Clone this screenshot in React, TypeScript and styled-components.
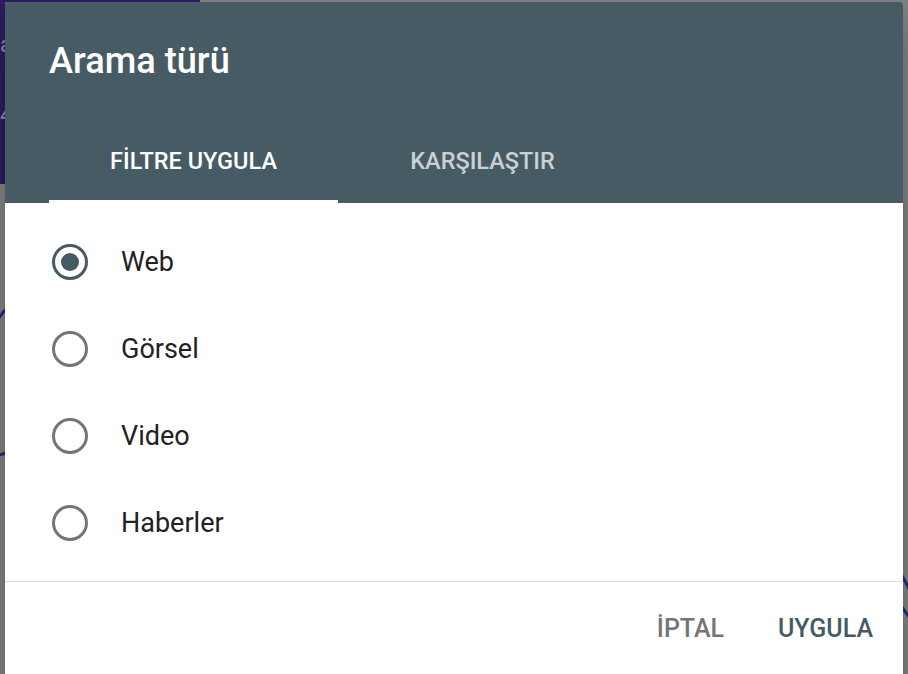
import React, { useState } from "react";
import styled, { createGlobalStyle } from "styled-components";

const Global = createGlobalStyle`
  html, body { margin: 0; padding: 0; width: 908px; height: 674px; overflow: hidden; }
  body { font-family: Roboto, "Noto Sans", Arial, sans-serif; -webkit-font-smoothing: antialiased; }
  * { box-sizing: border-box; }
`;

const Page = styled.div`
  position: relative;
  width: 908px;
  height: 674px;
  background: #7f7f7f;
  overflow: hidden;
`;

const BackTop = styled.div`
  display: flex;
  height: 184px;
`;

const BackBar = styled.div`
  width: 200px;
  height: 184px;
  background: #2c1b5f;
  display: flex;
  flex-direction: column;
  padding: 32px 0 0 0;
  gap: 44px;
  color: #8f87ad;
  font-size: 22px;
  line-height: 26px;
`;

const BackChart = styled.svg`
  display: block;
  width: 908px;
  height: 490px;
`;

const Dialog = styled.div`
  position: absolute;
  left: 5px;
  top: 2px;
  width: 898px;
  height: 700px;
  background: #ffffff;
  border-radius: 2px;
  overflow: hidden;
  box-shadow: 0 11px 15px -7px rgba(0,0,0,0.2), 0 24px 38px 3px rgba(0,0,0,0.14);
  display: flex;
  flex-direction: column;
`;

const Header = styled.div`
  background: #475b65;
  display: flex;
  flex-direction: column;
`;

const Title = styled.h2`
  margin: 0;
  height: 116px;
  padding: 38px 0 0 44px;
  font-size: 36.2px;
  line-height: 42px;
  font-weight: 500;
  color: #ffffff;
`;

const TabBar = styled.div`
  display: flex;
  padding-left: 44px;
  height: 85px;
`;

const Tab = styled.button<{ $active: boolean }>`
  position: relative;
  width: 289px;
  height: 85px;
  border: none;
  background: transparent;
  padding: 0;
  font-family: inherit;
  font-size: 23.5px;
  line-height: 28px;
  font-weight: 500;
  color: ${(p) => (p.$active ? "#ffffff" : "rgba(255,255,255,0.72)")};
  display: flex;
  align-items: center;
  justify-content: center;
  cursor: pointer;
  &::after {
    content: "";
    position: absolute;
    left: 0;
    right: 0;
    bottom: 0;
    height: 3px;
    background: ${(p) => (p.$active ? "#ffffff" : "transparent")};
  }
`;

const List = styled.div`
  display: flex;
  flex-direction: column;
  padding: 15px 0 15px 47px;
  border-bottom: 1px solid #dedede;
`;

const Row = styled.label`
  display: flex;
  align-items: center;
  gap: 33px;
  height: 87px;
  cursor: pointer;
`;

const Radio = styled.span<{ $checked: boolean }>`
  width: 36px;
  height: 36px;
  border-radius: 50%;
  border: 3.3px solid ${(p) => (p.$checked ? "#455a64" : "#757575")};
  display: flex;
  align-items: center;
  justify-content: center;
  flex-shrink: 0;
  &::before {
    content: "";
    width: 18px;
    height: 18px;
    border-radius: 50%;
    background: ${(p) => (p.$checked ? "#455a64" : "transparent")};
  }
`;

const Label = styled.span`
  font-size: 27px;
  line-height: 32px;
  color: #212121;
`;

const Footer = styled.div`
  display: flex;
  justify-content: flex-end;
  gap: 22px;
  padding: 24px 14px 0 0;
`;

const ActionButton = styled.button<{ $primary?: boolean }>`
  height: 46px;
  padding: 0 16px;
  border: none;
  background: transparent;
  font-family: inherit;
  font-size: 25px;
  line-height: 28px;
  font-weight: 500;
  color: ${(p) => (p.$primary ? "#455a64" : "#757575")};
  cursor: pointer;
`;

const options = ["Web", "Görsel", "Video", "Haberler"];

export default function App() {
  const [selected, setSelected] = useState("Web");
  const [tab, setTab] = useState(0);
  return (
    <>
      <Global />
      <Page>
        <BackTop>
          <BackBar>
            <span>a</span>
            <span>4</span>
          </BackBar>
        </BackTop>
        <BackChart viewBox="0 0 908 490">
          <path d="M-20 160 C 0 130, 10 120, 30 100" fill="none" stroke="#1f2a78" strokeWidth="3" />
          <path d="M-20 280 C -5 272, 5 268, 20 266" fill="none" stroke="#1f2a78" strokeWidth="3" />
          <path d="M895 380 C 905 395, 912 410, 920 430" fill="none" stroke="#1f2a78" strokeWidth="3" />
          <path d="M900 420 C 905 428, 910 435, 920 445" fill="none" stroke="#1f2a78" strokeWidth="3" />
        </BackChart>
        <Dialog role="dialog">
          <Header>
            <Title>Arama türü</Title>
            <TabBar>
              <Tab $active={tab === 0} onClick={() => setTab(0)}>FİLTRE UYGULA</Tab>
              <Tab $active={tab === 1} onClick={() => setTab(1)}>KARŞILAŞTIR</Tab>
            </TabBar>
          </Header>
          <List>
            {options.map((o) => (
              <Row key={o} onClick={() => setSelected(o)}>
                <Radio $checked={selected === o} />
                <Label>{o}</Label>
              </Row>
            ))}
          </List>
          <Footer>
            <ActionButton>İPTAL</ActionButton>
            <ActionButton $primary>UYGULA</ActionButton>
          </Footer>
        </Dialog>
      </Page>
    </>
  );
}
